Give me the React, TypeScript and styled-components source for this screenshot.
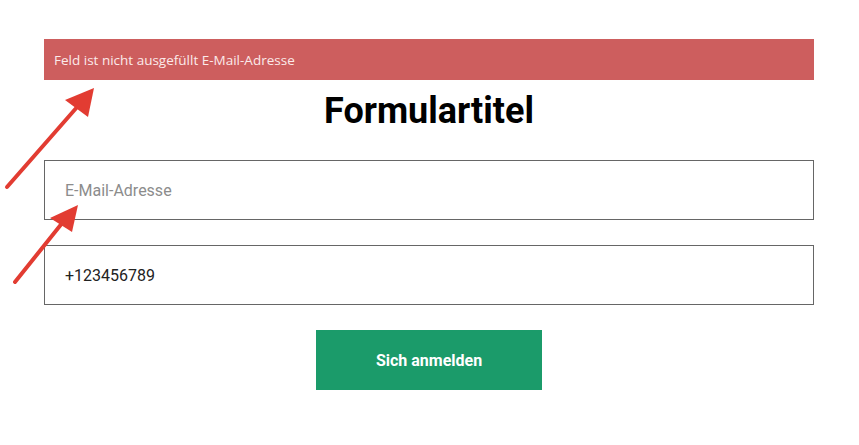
import React from "react";
import styled, { createGlobalStyle } from "styled-components";

const Global = createGlobalStyle`
  html, body { margin: 0; padding: 0; background: #fff; }
  body { font-family: Roboto, "Liberation Sans", sans-serif; }
`;

const Page = styled.div`
  position: relative;
  width: 859px;
  height: 445px;
  overflow: hidden;
  padding-top: 39px;
  box-sizing: border-box;
`;

const Form = styled.form`
  width: 770px;
  margin-left: 44px;
  display: flex;
  flex-direction: column;
`;

const ErrorBar = styled.div`
  height: 41px;
  background: #cd5e5e;
  color: #fbeaea;
  font-family: "Open Sans", sans-serif;
  font-size: 13.5px;
  display: flex;
  align-items: center;
  padding-left: 10px;
`;

const Title = styled.h1`
  margin: 11px 0 0;
  text-align: center;
  font-family: Roboto, sans-serif;
  font-weight: 700;
  font-size: 36px;
  line-height: 40px;
  color: #000;
`;

const Field = styled.input`
  box-sizing: border-box;
  height: 60px;
  width: 100%;
  margin-top: ${(p: { $mt: number }) => p.$mt}px;
  border: 1px solid #666;
  padding: 0 20px;
  font-family: Roboto, sans-serif;
  font-size: 16px;
  color: #222;
  outline: none;
  &::placeholder { color: #8c8c8c; }
`;

const Submit = styled.button`
  align-self: center;
  margin-top: 25px;
  width: 226px;
  height: 60px;
  border: none;
  background: #1b9b6a;
  color: #fff;
  font-family: Roboto, sans-serif;
  font-weight: 700;
  font-size: 16px;
  cursor: pointer;
`;

const Overlay = styled.svg`
  position: absolute;
  left: 0;
  top: 0;
  pointer-events: none;
`;

export default function App() {
  return (
    <>
      <Global />
      <Page>
        <Form onSubmit={(e) => e.preventDefault()}>
          <ErrorBar>Feld ist nicht ausgefüllt E-Mail-Adresse</ErrorBar>
          <Title>Formulartitel</Title>
          <Field $mt={29} placeholder="E-Mail-Adresse" />
          <Field $mt={25} defaultValue="+123456789" />
          <Submit type="submit">Sich anmelden</Submit>
        </Form>
        <Overlay width="859" height="445" viewBox="0 0 859 445">
          <line x1="7" y1="187" x2="78" y2="106" stroke="#e23c32" strokeWidth="4" strokeLinecap="round" />
          <polygon points="94,88 65,100 88,117" fill="#e23c32" />
          <line x1="15" y1="282" x2="63" y2="222" stroke="#e23c32" strokeWidth="4" strokeLinecap="round" />
          <polygon points="78,205 50,218 72,232" fill="#e23c32" />
        </Overlay>
      </Page>
    </>
  );
}
